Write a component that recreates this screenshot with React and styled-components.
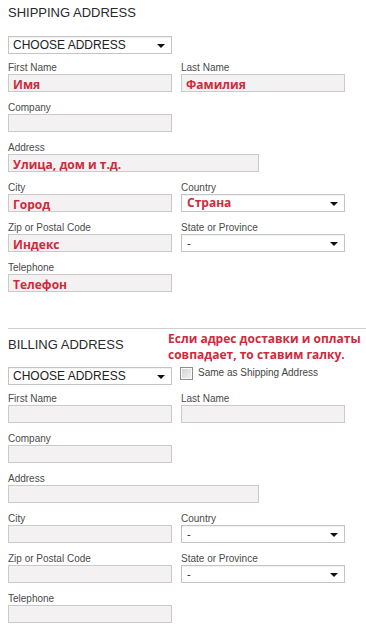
import styled, { createGlobalStyle } from "styled-components";

const Global = createGlobalStyle`
  html, body {
    margin: 0;
    padding: 0;
    background: #fff;
  }
  body {
    font-family: "Liberation Sans", Arial, sans-serif;
    color: #333;
  }
`

const Page = styled.div`
  width: 366px;
  height: 639px;
  overflow: hidden;
  padding: 5px 0 0 8px;
  box-sizing: border-box;
`

const Section = styled.section`
  display: flex;
  flex-direction: column;
`

const Heading = styled.h2`
  margin: 0;
  padding-top: ${(p) => p.$pad || 0}px;
  font-size: 13px;
  line-height: 16px;
  font-weight: 400;
  color: #2a2a2a;
  white-space: nowrap;
`

const HeaderRow = styled.div`
  display: grid;
  grid-template-columns: 160px 1fr;
  align-items: start;
`

const Note = styled.div`
  padding-top: 2px;
  font-family: "Open Sans", "Noto Sans", sans-serif;
  font-weight: 700;
  font-size: 12px;
  line-height: 16px;
  color: #cf2a3b;
  white-space: nowrap;
`

const ChooseRow = styled.div`
  display: grid;
  grid-template-columns: 164px 1fr;
  column-gap: 8px;
  margin-top: ${(p) => p.$top}px;
  margin-bottom: 8px;
  align-items: start;
`

const SelectBox = styled.div`
  position: relative;
  box-sizing: border-box;
  width: 164px;
  height: 18px;
  border: 1px solid #c4c4c4;
  background: #fff;
  box-shadow: inset 0 1px 1px rgba(0, 0, 0, 0.06);
  padding-left: ${(p) => (p.$big ? 4 : 5)}px;
  font-size: ${(p) => (p.$big ? 12 : 11)}px;
  line-height: 16px;
  color: #222;

  &::after {
    content: "";
    position: absolute;
    right: 6px;
    top: 7px;
    border-left: 4px solid transparent;
    border-right: 4px solid transparent;
    border-top: 4px solid #111;
  }
`

const RedValue = styled.span`
  font-family: "Open Sans", "Noto Sans", sans-serif;
  font-weight: 700;
  font-size: 12px;
  line-height: 16px;
  color: #cf2a3b;
`

const CheckRow = styled.label`
  display: flex;
  align-items: flex-start;
  gap: 5px;
  font-size: 10px;
  line-height: 12px;
  color: #444;
`

const CheckBox = styled.span`
  display: block;
  width: 11px;
  height: 11px;
  border: 1px solid #8e8e8e;
  background: linear-gradient(135deg, #d2d2d2, #f4f4f4);
  box-shadow: inset 0 0 0 1px #fafafa;
`

const FieldGrid = styled.div`
  display: grid;
  grid-template-columns: 164px 164px;
  column-gap: 9px;
  row-gap: 10px;
  align-items: start;
`

const Field = styled.div`
  display: flex;
  flex-direction: column;
  grid-column: ${(p) => (p.$wide ? "1 / span 2" : p.$col || "auto")};
`

const Label = styled.div`
  font-size: 10px;
  line-height: 12px;
  color: #4a4a4a;
`

const TextBox = styled.div`
  box-sizing: border-box;
  width: ${(p) => (p.$wide ? 251 : 164)}px;
  height: 18px;
  border: 1px solid #cacaca;
  background: #f3f1f1;
  padding-left: 4px;
  overflow: hidden;
`

const Divider = styled.hr`
  margin: 36px 0 0;
  border: 0;
  height: 1px;
  background: #cfcfcf;
`

const val = (v) => (v ? <RedValue>{v}</RedValue> : null);

const AddressFields = ({ values = {} }) => (
  <FieldGrid>
    <Field>
      <Label>First Name</Label>
      <TextBox>{val(values.first)}</TextBox>
    </Field>
    <Field>
      <Label>Last Name</Label>
      <TextBox>{val(values.last)}</TextBox>
    </Field>
    <Field $col="1">
      <Label>Company</Label>
      <TextBox />
    </Field>
    <Field $wide>
      <Label>Address</Label>
      <TextBox $wide>{val(values.street)}</TextBox>
    </Field>
    <Field>
      <Label>City</Label>
      <TextBox>{val(values.city)}</TextBox>
    </Field>
    <Field>
      <Label>Country</Label>
      <SelectBox>{values.country ? val(values.country) : "-"}</SelectBox>
    </Field>
    <Field>
      <Label>Zip or Postal Code</Label>
      <TextBox>{val(values.zip)}</TextBox>
    </Field>
    <Field>
      <Label>State or Province</Label>
      <SelectBox>-</SelectBox>
    </Field>
    <Field $col="1">
      <Label>Telephone</Label>
      <TextBox>{val(values.phone)}</TextBox>
    </Field>
  </FieldGrid>
);

export default function App() {
  return (
    <>
      <Global />
      <Page>
        <Section>
          <Heading>SHIPPING ADDRESS</Heading>
          <ChooseRow $top={15}>
            <SelectBox $big>CHOOSE ADDRESS</SelectBox>
          </ChooseRow>
          <AddressFields
            values={{
              first: "Имя",
              last: "Фамилия",
              street: "Улица, дом и т.д.",
              city: "Город",
              country: "Страна",
              zip: "Индекс",
              phone: "Телефон",
            }}
          />
        </Section>

        <Divider />

        <Section>
          <HeaderRow>
            <Heading $pad={8}>BILLING ADDRESS</Heading>
            <Note>
              Если адрес доставки и оплаты
              <br />
              совпадает, то ставим галку.
            </Note>
          </HeaderRow>
          <ChooseRow $top={4}>
            <SelectBox $big>CHOOSE ADDRESS</SelectBox>
            <CheckRow>
              <CheckBox />
              Same as Shipping Address
            </CheckRow>
          </ChooseRow>
          <AddressFields />
        </Section>
      </Page>
    </>
  );
}
